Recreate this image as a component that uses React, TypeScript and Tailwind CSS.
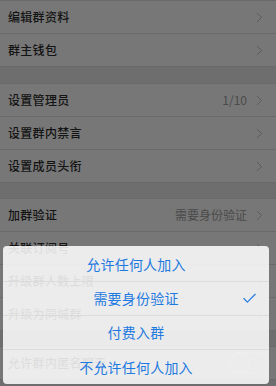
import { Check } from "lucide-react";

const font = "font-['Noto_Sans_CJK_SC','Noto_Sans',sans-serif]";

function Chevron() {
    return (
        <svg width="7" height="11" viewBox="0 0 7 11" className="shrink-0">
            <path d="M1 1l4.5 4.5L1 10" fill="none" stroke="#5c5c5c" strokeWidth="1" />
        </svg>
    );
}

function Row({ label, value, toggle }: { label: string; value?: string; toggle?: boolean }) {
    return (
        <div className="h-[33px] flex items-center pl-[8px] pr-[13px] border-b border-[#6a6a6a] bg-[#777777]">
            <span className="flex-1 text-[12px] font-medium text-[#141414] tracking-[0.3px]">{label}</span>
            {value && <span className="text-[12px] text-[#4a4a4a] mr-[9px]">{value}</span>}
            {toggle ? (
                <div className="w-[40px] h-[22px] rounded-full border border-[#8a8a8a] flex items-center -mr-[6px]">
                    <div className="w-[20px] h-[20px] rounded-full border border-[#8a8a8a] bg-[#7c7c7c]" />
                </div>
            ) : (
                <Chevron />
            )}
        </div>
    );
}

function Gap({ h }: { h: string }) {
    return <div className={`${h} bg-[#6e6e6e] border-b border-[#6a6a6a]`} />;
}

const options = ["允许任何人加入", "需要身份验证", "付费入群", "不允许任何人加入"];

export default function App() {
    return (
        <div className={`relative w-[276px] h-[386px] overflow-hidden bg-[#6e6e6e] ${font}`}>
            <div className="border-t border-[#6a6a6a]">
                <Row label="编辑群资料" />
                <Row label="群主钱包" />
                <Gap h="h-[17px]" />
                <Row label="设置管理员" value="1/10" />
                <Row label="设置群内禁言" />
                <Row label="设置成员头衔" />
                <Gap h="h-[16px]" />
                <Row label="加群验证" value="需要身份验证" />
                <Row label="关联订阅号" />
                <Row label="升级群人数上限" />
                <Row label="升级为同城群" />
                <Gap h="h-[16px]" />
                <Row label="允许群内匿名聊天" toggle />
            </div>

            {/* action sheet */}
            <div className="absolute left-[3px] top-[246px] w-[266px] rounded-[4px] bg-white/[0.86] pt-[2px]">
                {options.map((o, i) => (
                    <div
                        key={o}
                        className={`relative h-[34px] flex items-center justify-center ${i < options.length - 1 ? "border-b border-[#d6d6d6]/70" : ""}`}
                    >
                        <span className="text-[14px] text-[#1f7ae0] tracking-[0.2px]">{o}</span>
                        {i === 1 && (
                            <Check size={17} strokeWidth={1.6} className="absolute left-[238px] text-[#1f7ae0]" />
                        )}
                    </div>
                ))}
            </div>
        </div>
    );
}
